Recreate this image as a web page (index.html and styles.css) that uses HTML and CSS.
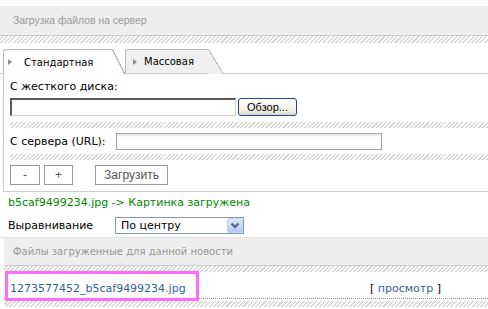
FILE: index.html
```html
<!DOCTYPE html>
<html lang="ru">
<head>
    <meta charset="UTF-8">
    <title>Загрузка файлов на сервер</title>
    <link rel="stylesheet" href="styles.css">
</head>
<body>
    <div class="panel-title top-title">Загрузка файлов на сервер</div>
    <div class="hatch"></div>

    <!-- Tabs -->
    <div class="tabs">
        <div class="tab active"><span class="arrow"></span>Стандартная</div>
        <div class="tab second"><span class="arrow"></span>Массовая</div>
    </div>
    <div class="tab-body">
        <div class="label-line">С жесткого диска:</div>
        <div class="file-row">
            <span class="file-field"></span>
            <button class="browse-btn">Обзор...</button>
        </div>
        <div class="hatch thin"></div>
        <div class="url-row">
            <label for="url">С сервера (URL):</label>
            <input type="text" id="url" class="url-input">
        </div>
        <div class="hatch thin small-gap"></div>
        <div class="btn-row">
            <button class="plain-btn minus">-</button>
            <button class="plain-btn plus">+</button>
            <button class="plain-btn upload">Загрузить</button>
        </div>
    </div>

    <div class="status">b5caf9499234.jpg -&gt; Картинка загружена</div>

    <div class="align-row">
        <span class="align-label">Выравнивание</span>
        <div class="select">
            <span>По центру</span>
            <svg class="select-arrow" width="16" height="15" viewBox="0 0 16 15">
                <defs>
                    <linearGradient id="sel" x1="0" y1="0" x2="0" y2="1">
                        <stop offset="0" stop-color="#dfe8fb"/>
                        <stop offset="1" stop-color="#b4c7f2"/>
                    </linearGradient>
                </defs>
                <rect x="0.5" y="0.5" width="15" height="14" rx="1.5" fill="url(#sel)" stroke="#c3d3f5"/>
                <path d="M4.5 5.5 L8 9 L11.5 5.5" fill="none" stroke="#4d6185" stroke-width="2"/>
            </svg>
        </div>
    </div>

    <!-- Uploaded files -->
    <div class="files">
        <div class="panel-title files-title">Файлы загруженные для данной новости</div>
        <div class="hatch thin"></div>
        <div class="file-item">
            <a href="#" class="file-link">1273577452_b5caf9499234.jpg</a>
            <span class="view">[ <a href="#">просмотр</a> ]</span>
            <span class="highlight"></span>
        </div>
        <div class="hatch thin bottom"></div>
    </div>
</body>
</html>
```

FILE: styles.css
```css
/* General */
body {
    margin: 0;
    font-family: "DejaVu Sans", Verdana, sans-serif;
    font-size: 11px;
    color: #000;
    background: #fff;
}

a {
    color: #36619a;
    text-decoration: none;
}

.panel-title {
    background: #eee;
    border-bottom: 1px solid #ccc;
    color: #999;
}

.top-title {
    margin-top: 6px;
    height: 29px;
    line-height: 29px;
    padding-left: 13px;
    font-family: "Liberation Sans", Tahoma, sans-serif;
    font-size: 10.4px;
}

.hatch {
    height: 7px;
    background: repeating-linear-gradient(135deg, #fff 0 1.5px, #d9d9d9 1.5px 3px);
}

.hatch.thin {
    height: 6px;
    margin-top: 6px;
}

.hatch.small-gap {
    margin-top: 4px;
}

/* Tabs */
.tabs {
    display: flex;
    margin-top: 6px;
    padding-left: 3px;
    height: 24px;
    border-bottom: 1px solid #ccc;
    font-size: 10px;
}

.tab {
    position: relative;
    height: 24px;
    border-top: 1px solid #bbb;
    border-left: 1px solid #bbb;
    border-top-left-radius: 3px;
    display: flex;
    align-items: center;
    box-sizing: border-box;
}

.tab::after {
    content: "";
    position: absolute;
    top: -1px;
    right: -13px;
    width: 13px;
    height: 25px;
    background: linear-gradient(to bottom left, transparent calc(50% - 0.7px), #bbb calc(50% - 0.7px), #bbb calc(50% + 0.3px), #fff calc(50% + 0.3px));
}

.tab.active {
    width: 109px;
    height: 25px;
    margin-bottom: -1px;
    margin-right: 13px;
    padding-left: 4px;
    background: #fff;
}

.tab.active::after {
    height: 26px;
}

.tab.second {
    width: 83px;
    padding-left: 7px;
    background: #f0f0f0;
}

.tab.second::after {
    right: -15px;
    width: 15px;
    background: linear-gradient(to bottom left, transparent calc(50% - 0.7px), #bbb calc(50% - 0.7px), #bbb calc(50% + 0.3px), #f0f0f0 calc(50% + 0.3px));
}

.arrow {
    display: inline-block;
    width: 0;
    height: 0;
    border-left: 4px solid #8a8a8a;
    border-top: 3.5px solid transparent;
    border-bottom: 3.5px solid transparent;
    margin-right: 12px;
}

.tab.second .arrow {
    margin-right: 7px;
}

/* Tab body */
.tab-body {
    margin-left: 3px;
    border-left: 1px solid #ccc;
    border-bottom: 1px solid #ccc;
    padding: 5px 0 6px 6px;
}

.label-line {
    line-height: 16px;
}

.file-row {
    display: flex;
    margin-top: 3px;
    height: 18px;
}

.file-field {
    width: 226px;
    height: 18px;
    box-sizing: border-box;
    border-top: 2px solid #5a5a5a;
    border-left: 2px solid #5a5a5a;
    border-right: 1px solid #d4d0c8;
    border-bottom: 1px solid #d4d0c8;
    background: #fff;
}

.browse-btn {
    margin-left: 2px;
    width: 59px;
    height: 18px;
    padding: 0;
    border: 1px solid #1c4a7e;
    border-radius: 3px;
    background: linear-gradient(#fff, #f1efe6 70%, #dcd8c8);
    font-family: "Liberation Sans", Tahoma, sans-serif;
    font-size: 11px;
    color: #000;
}

.url-row {
    display: flex;
    align-items: center;
    margin-top: 5px;
}

.url-row label {
    width: 106px;
}

.url-input {
    width: 266px;
    height: 17px;
    box-sizing: border-box;
    margin: 0;
    border: 1px solid #a5a5a5;
    box-shadow: inset 0 2px 2px #e8e8e8;
}

.btn-row {
    display: flex;
    margin-top: 5px;
}

.plain-btn {
    height: 20px;
    padding: 0;
    border: 1px solid #9a9a9a;
    background: #fff;
    color: #555;
    font-family: "Liberation Sans", Tahoma, sans-serif;
    font-size: 12px;
}

.minus {
    width: 30px;
}

.plus {
    width: 29px;
    margin-left: 4px;
}

.upload {
    width: 73px;
    margin-left: 22px;
}

/* Status and alignment */
.status {
    margin-top: 3px;
    padding-left: 8px;
    line-height: 16px;
    color: #080;
}

.align-row {
    display: flex;
    align-items: center;
    margin-top: 6px;
    padding-left: 8px;
    padding-bottom: 3px;
    border-bottom: 1px solid #e2e2e2;
}

.align-label {
    width: 107px;
}

.select {
    width: 129px;
    height: 17px;
    box-sizing: border-box;
    border: 1px solid #7f9db9;
    display: flex;
    align-items: center;
    justify-content: space-between;
    padding-left: 5px;
}

.select-arrow {
    display: block;
}

/* Uploaded files */
.files {
    margin-left: 4px;
}

.files-title {
    height: 27px;
    line-height: 27px;
    padding-left: 9px;
    font-size: 10px;
}

.files .hatch.thin {
    margin-top: 0;
}

.files .hatch.bottom {
    margin-top: 2px;
}

.file-item {
    position: relative;
    display: flex;
    justify-content: space-between;
    padding: 9px 47px 1px 6px;
    line-height: 16px;
    border-bottom: 1px dotted #999;
}

.highlight {
    position: absolute;
    left: 1px;
    top: -1px;
    width: 194px;
    height: 30px;
    box-sizing: border-box;
    border: 3px solid #ff6bff;
}
```
